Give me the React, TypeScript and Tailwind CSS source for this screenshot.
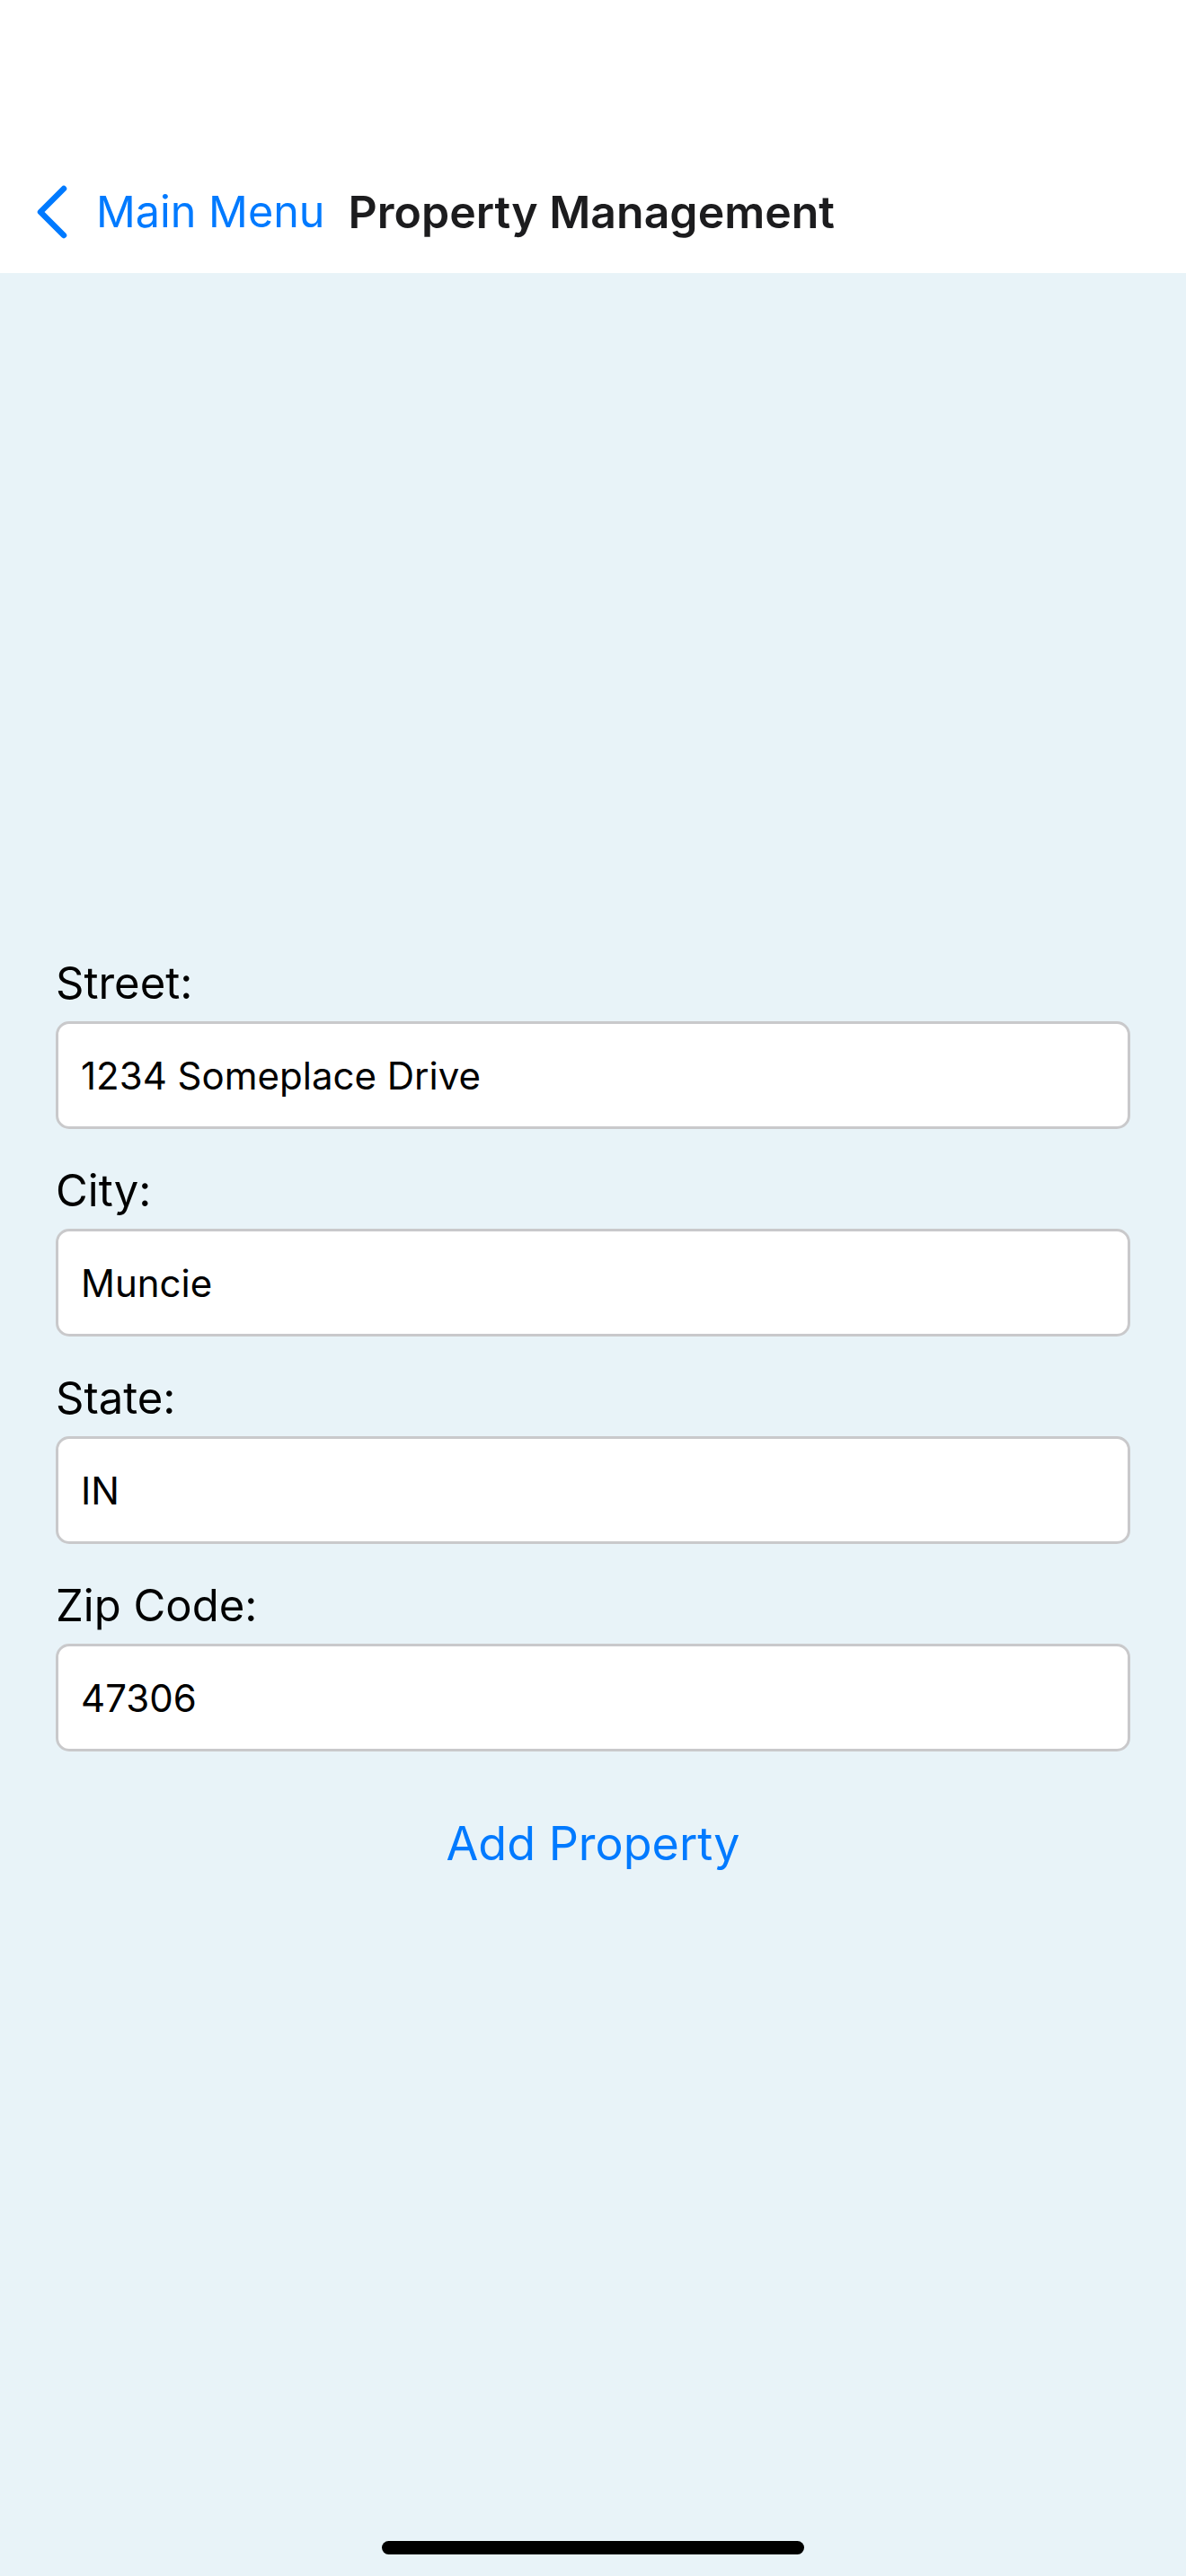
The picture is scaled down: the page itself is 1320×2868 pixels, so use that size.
import React from 'react';

const fields = [
  { label: 'Street:', value: '1234 Someplace Drive' },
  { label: 'City:', value: 'Muncie' },
  { label: 'State:', value: 'IN' },
  { label: 'Zip Code:', value: '47306' },
];

const App: React.FC = () => {
  return (
    <div className="h-[2868px] flex flex-col bg-[#e8f3f8] font-['Inter',sans-serif] antialiased">
      {/* Nav bar */}
      <header className="h-[304px] bg-white flex-shrink-0 pt-[206px]">
        <div className="flex items-center h-[60px] pl-[40px]">
          <svg width="36" height="60" viewBox="0 0 36 60" className="flex-shrink-0">
            <polyline
              points="31,4 5,30 31,56"
              fill="none"
              stroke="#007aff"
              strokeWidth="6.5"
              strokeLinecap="round"
              strokeLinejoin="round"
            />
          </svg>
          <span className="ml-[31px] text-[48.5px] leading-none text-[#007aff]">Main Menu</span>
          <span className="ml-[26px] text-[50px] leading-none font-semibold text-[#1c1c1e]">
            Property Management
          </span>
        </div>
      </header>

      {/* Form */}
      <main className="flex-1 flex flex-col px-[62px] pt-[760px]">
        <div className="flex flex-col gap-[38px]">
          {fields.map((f) => (
            <div key={f.label} className="flex flex-col gap-[12px]">
              <label className="text-[49px] leading-[61px] text-black">{f.label}</label>
              <div className="h-[120px] rounded-[15px] border-[3px] border-[#c9c9cb] bg-white flex items-center px-[25px]">
                <span className="text-[42px] text-black">{f.value}</span>
              </div>
            </div>
          ))}
        </div>
        <button className="mt-[70px] self-center text-[52px] leading-[66px] text-[#007aff]">
          Add Property
        </button>

        {/* Home indicator */}
        <div className="mt-auto mb-[24px] self-center w-[470px] h-[15px] rounded-full bg-black" />
      </main>
    </div>
  );
};

export default App;
